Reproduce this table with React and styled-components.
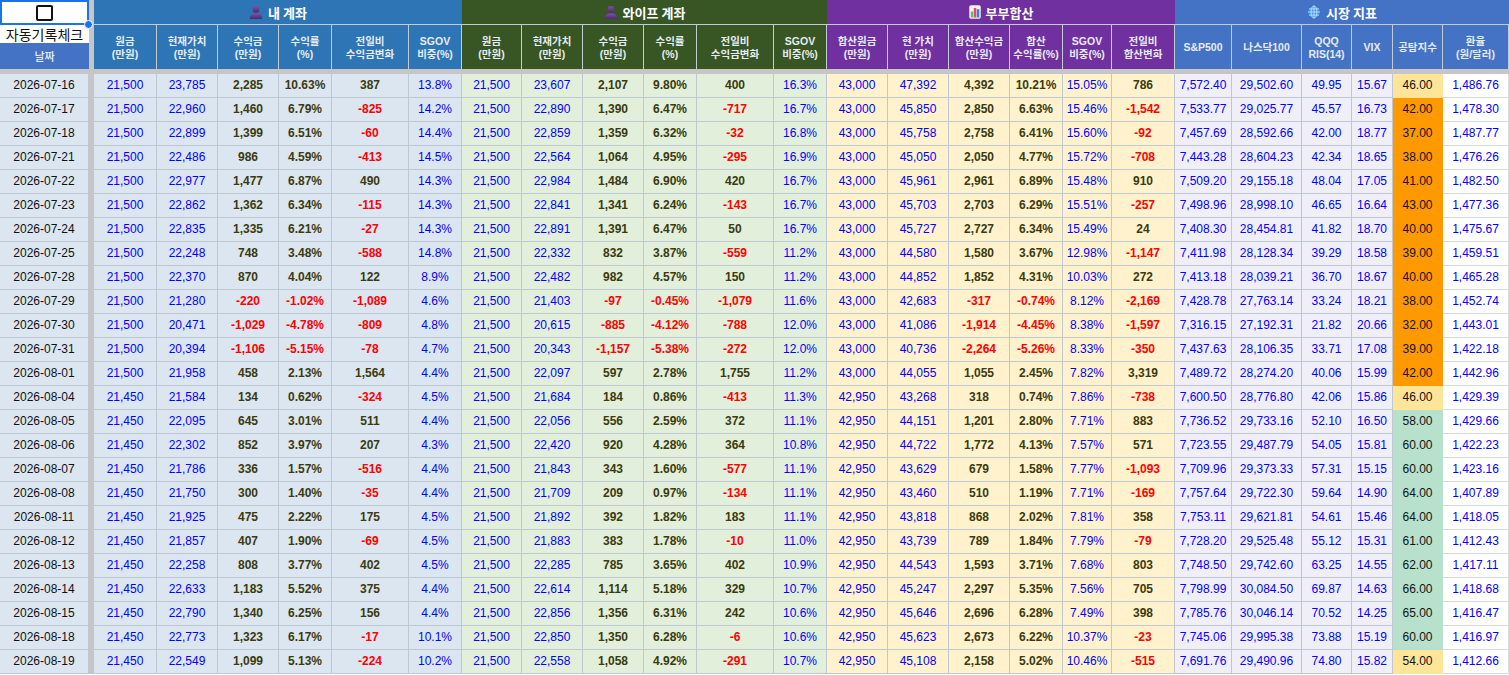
import React from 'react';
import styled, { createGlobalStyle } from 'styled-components';

const GlobalStyle = createGlobalStyle`
  html, body { margin: 0; padding: 0; background: #ffffff; overflow: hidden; }
  body { font-family: "Liberation Sans", Arial, "Noto Sans CJK KR", sans-serif; }
  * { box-sizing: border-box; }
`;

const COLS =
  '89px 5px 63px 61px 61px 53px 77px 53px 60px 61px 61px 53px 77px 53px 61px 61px 61px 53px 49px 63px 57px 70px 50px 41px 50px 66px';

const FREEZE = '#c6c6c6';
const GRID = '#bfc8d1';
const BLUE = '#0000ff';
const OLIVE = '#3a3a0e';
const RED = '#ff0000';

const Sheet = styled.div`
  width: 1509px;
  display: flex;
  flex-direction: column;
`;

const HeaderGrid = styled.div`
  display: grid;
  grid-template-columns: ${COLS};
  grid-template-rows: 25px 44px;
`;

const LeftHead = styled.div`
  grid-row: 1 / span 2;
  grid-column: 1;
  display: flex;
  flex-direction: column;
  position: relative;
  z-index: 2;
`;

const CheckCell = styled.div`
  height: 25px;
  background: #ffffff;
  display: flex;
  align-items: center;
  justify-content: center;
  position: relative;
  box-shadow: inset 0 0 0 2px #1a73e8;
  &::after {
    content: '';
    position: absolute;
    right: -4px;
    bottom: -4px;
    width: 7px;
    height: 7px;
    border-radius: 50%;
    background: #1a73e8;
    border: 1px solid #ffffff;
  }
`;

const CheckBox = styled.div`
  width: 17px;
  height: 16px;
  border: 2px solid #111111;
  border-radius: 2px;
  background: #ffffff;
`;

const AutoLabel = styled.div`
  height: 18px;
  background: #ffffff;
  color: #111111;
  font-family: "Noto Sans CJK KR", sans-serif;
  font-size: 14px;
  line-height: 18px;
  text-align: center;
  white-space: nowrap;
  overflow: hidden;
`;

const DateHead = styled.div`
  height: 26px;
  background: #4472c4;
  color: #e8eef8;
  font-family: "Noto Sans CJK KR", sans-serif;
  font-size: 11px;
  font-weight: 500;
  display: flex;
  align-items: center;
  justify-content: center;
`;

const FreezeCol = styled.div`
  grid-row: ${(p) => p.$rows || 'auto'};
  grid-column: 2;
  background: ${FREEZE};
`;

const GroupTitle = styled.div`
  grid-row: 1;
  grid-column: span 6;
  background: ${(p) => p.$bg};
  border-bottom: 1px solid ${(p) => p.$line};
  color: #ffffff;
  font-family: "Noto Sans CJK KR", sans-serif;
  font-size: 13px;
  font-weight: 700;
  display: flex;
  align-items: center;
  justify-content: center;
  gap: 5px;
`;

const SubHead = styled.div`
  grid-row: 2;
  background: ${(p) => p.$bg};
  border-right: 1px solid ${(p) => p.$line};
  color: #e6ecf3;
  font-family: "Liberation Sans", Arial, "Noto Sans CJK KR", sans-serif;
  font-size: 10.5px;
  font-weight: 700;
  line-height: 13px;
  display: flex;
  flex-direction: column;
  align-items: center;
  justify-content: center;
  text-align: center;
  white-space: nowrap;
  padding-top: 1px;
`;

const FreezeRow = styled.div`
  height: 5px;
  background: ${FREEZE};
`;

const DataRow = styled.div`
  display: grid;
  grid-template-columns: ${COLS};
  height: 24px;
`;

const Cell = styled.div`
  background: ${(p) => p.$bg};
  color: ${(p) => p.$color};
  font-weight: ${(p) => (p.$bold ? 700 : 400)};
  border-right: 1px solid ${(p) => p.$line || GRID};
  border-bottom: 1px solid ${(p) => p.$line || GRID};
  font-size: 12px;
  line-height: 23px;
  text-align: center;
  white-space: nowrap;
  overflow: hidden;
`;

const GapCell = styled.div`
  background: ${FREEZE};
`;

const PersonIcon = ({ id }) => (
  <svg width="14" height="14" viewBox="0 0 14 14">
    <defs>
      <linearGradient id={id} x1="0" y1="0" x2="0" y2="1">
        <stop offset="0" stopColor="#7d52a8" />
        <stop offset="1" stopColor="#4a2a6c" />
      </linearGradient>
    </defs>
    <circle cx="7" cy="4.4" r="3.4" fill={`url(#${id})`} />
    <path d="M0.8 14 C0.8 9.6 3.4 8.2 7 8.2 C10.6 8.2 13.2 9.6 13.2 14 Z" fill={`url(#${id})`} />
  </svg>
);

const ChartIcon = () => (
  <svg width="12" height="14" viewBox="0 0 12 14">
    <rect x="0.5" y="0.5" width="11" height="13" rx="1.5" fill="#f2f2f2" stroke="#cfcfcf" strokeWidth="0.8" />
    <rect x="1.8" y="6.5" width="2.5" height="6" fill="#5fc35a" />
    <rect x="4.8" y="3" width="2.5" height="9.5" fill="#e8467c" />
    <rect x="7.8" y="4.2" width="2.5" height="8.3" fill="#3a7fdc" />
  </svg>
);

const GlobeIcon = () => (
  <svg width="14" height="14" viewBox="0 0 14 14">
    <circle cx="7" cy="7" r="6.3" fill="#3e93e6" stroke="#2868b8" strokeWidth="0.6" />
    <g fill="none" stroke="#cfe7ff" strokeWidth="0.8">
      <ellipse cx="7" cy="7" rx="2.9" ry="6.2" />
      <line x1="7" y1="0.8" x2="7" y2="13.2" />
      <line x1="0.8" y1="7" x2="13.2" y2="7" />
      <path d="M1.9 3.9 H12.1 M1.9 10.1 H12.1" />
    </g>
  </svg>
);

const GROUPS = [
  {
    title: '내 계좌',
    icon: <PersonIcon id="pa" />,
    head: '#2e75b6',
    body: '#dce6f1',
    heads: [['원금', '(만원)'], ['현재가치', '(만원)'], ['수익금', '(만원)'], ['수익률', '(%)'], ['전일비', '수익금변화'], ['SGOV', '비중(%)']],
    kinds: ['b', 'b', 's', 's', 's', 'b'],
  },
  {
    title: '와이프 계좌',
    icon: <PersonIcon id="pb" />,
    head: '#375623',
    body: '#e2efda',
    heads: [['원금', '(만원)'], ['현재가치', '(만원)'], ['수익금', '(만원)'], ['수익률', '(%)'], ['전일비', '수익금변화'], ['SGOV', '비중(%)']],
    kinds: ['b', 'b', 's', 's', 's', 'b'],
  },
  {
    title: '부부합산',
    icon: <ChartIcon />,
    head: '#7030a0',
    body: '#fff2cc',
    heads: [['합산원금', '(만원)'], ['현 가치', '(만원)'], ['합산수익금', '(만원)'], ['합산', '수익률(%)'], ['SGOV', '비중(%)'], ['전일비', '합산변화']],
    kinds: ['b', 'b', 's', 's', 'b', 's'],
  },
  {
    title: '시장 지표',
    icon: <GlobeIcon />,
    head: '#4472c4',
    body: '#f0eff7',
    heads: [['S&P500'], ['나스닥100'], ['QQQ', 'RIS(14)'], ['VIX'], ['공탐지수'], ['환율', '(원/달러)']],
    kinds: ['b', 'b', 'b', 'b', 'f', 'w'],
  },
];

const RAW = `2026-07-16|21,500 23,785 2,285 10.63% 387 13.8%|21,500 23,607 2,107 9.80% 400 16.3%|43,000 47,392 4,392 10.21% 15.05% 786|7,572.40 29,502.60 49.95 15.67 46.00 1,486.76
2026-07-17|21,500 22,960 1,460 6.79% -825 14.2%|21,500 22,890 1,390 6.47% -717 16.7%|43,000 45,850 2,850 6.63% 15.46% -1,542|7,533.77 29,025.77 45.57 16.73 42.00 1,478.30
2026-07-18|21,500 22,899 1,399 6.51% -60 14.4%|21,500 22,859 1,359 6.32% -32 16.8%|43,000 45,758 2,758 6.41% 15.60% -92|7,457.69 28,592.66 42.00 18.77 37.00 1,487.77
2026-07-21|21,500 22,486 986 4.59% -413 14.5%|21,500 22,564 1,064 4.95% -295 16.9%|43,000 45,050 2,050 4.77% 15.72% -708|7,443.28 28,604.23 42.34 18.65 38.00 1,476.26
2026-07-22|21,500 22,977 1,477 6.87% 490 14.3%|21,500 22,984 1,484 6.90% 420 16.7%|43,000 45,961 2,961 6.89% 15.48% 910|7,509.20 29,155.18 48.04 17.05 41.00 1,482.50
2026-07-23|21,500 22,862 1,362 6.34% -115 14.3%|21,500 22,841 1,341 6.24% -143 16.7%|43,000 45,703 2,703 6.29% 15.51% -257|7,498.96 28,998.10 46.65 16.64 43.00 1,477.36
2026-07-24|21,500 22,835 1,335 6.21% -27 14.3%|21,500 22,891 1,391 6.47% 50 16.7%|43,000 45,727 2,727 6.34% 15.49% 24|7,408.30 28,454.81 41.82 18.70 40.00 1,475.67
2026-07-25|21,500 22,248 748 3.48% -588 14.8%|21,500 22,332 832 3.87% -559 11.2%|43,000 44,580 1,580 3.67% 12.98% -1,147|7,411.98 28,128.34 39.29 18.58 39.00 1,459.51
2026-07-28|21,500 22,370 870 4.04% 122 8.9%|21,500 22,482 982 4.57% 150 11.2%|43,000 44,852 1,852 4.31% 10.03% 272|7,413.18 28,039.21 36.70 18.67 40.00 1,465.28
2026-07-29|21,500 21,280 -220 -1.02% -1,089 4.6%|21,500 21,403 -97 -0.45% -1,079 11.6%|43,000 42,683 -317 -0.74% 8.12% -2,169|7,428.78 27,763.14 33.24 18.21 38.00 1,452.74
2026-07-30|21,500 20,471 -1,029 -4.78% -809 4.8%|21,500 20,615 -885 -4.12% -788 12.0%|43,000 41,086 -1,914 -4.45% 8.38% -1,597|7,316.15 27,192.31 21.82 20.66 32.00 1,443.01
2026-07-31|21,500 20,394 -1,106 -5.15% -78 4.7%|21,500 20,343 -1,157 -5.38% -272 12.0%|43,000 40,736 -2,264 -5.26% 8.33% -350|7,437.63 28,106.35 33.71 17.08 39.00 1,422.18
2026-08-01|21,500 21,958 458 2.13% 1,564 4.4%|21,500 22,097 597 2.78% 1,755 11.2%|43,000 44,055 1,055 2.45% 7.82% 3,319|7,489.72 28,274.20 40.06 15.99 42.00 1,442.96
2026-08-04|21,450 21,584 134 0.62% -324 4.5%|21,500 21,684 184 0.86% -413 11.3%|42,950 43,268 318 0.74% 7.86% -738|7,600.50 28,776.80 42.06 15.86 46.00 1,429.39
2026-08-05|21,450 22,095 645 3.01% 511 4.4%|21,500 22,056 556 2.59% 372 11.1%|42,950 44,151 1,201 2.80% 7.71% 883|7,736.52 29,733.16 52.10 16.50 58.00 1,429.66
2026-08-06|21,450 22,302 852 3.97% 207 4.3%|21,500 22,420 920 4.28% 364 10.8%|42,950 44,722 1,772 4.13% 7.57% 571|7,723.55 29,487.79 54.05 15.81 60.00 1,422.23
2026-08-07|21,450 21,786 336 1.57% -516 4.4%|21,500 21,843 343 1.60% -577 11.1%|42,950 43,629 679 1.58% 7.77% -1,093|7,709.96 29,373.33 57.31 15.15 60.00 1,423.16
2026-08-08|21,450 21,750 300 1.40% -35 4.4%|21,500 21,709 209 0.97% -134 11.1%|42,950 43,460 510 1.19% 7.71% -169|7,757.64 29,722.30 59.64 14.90 64.00 1,407.89
2026-08-11|21,450 21,925 475 2.22% 175 4.5%|21,500 21,892 392 1.82% 183 11.1%|42,950 43,818 868 2.02% 7.81% 358|7,753.11 29,621.81 54.61 15.46 64.00 1,418.05
2026-08-12|21,450 21,857 407 1.90% -69 4.5%|21,500 21,883 383 1.78% -10 11.0%|42,950 43,739 789 1.84% 7.79% -79|7,728.20 29,525.48 55.12 15.31 61.00 1,412.43
2026-08-13|21,450 22,258 808 3.77% 402 4.5%|21,500 22,285 785 3.65% 402 10.9%|42,950 44,543 1,593 3.71% 7.68% 803|7,748.50 29,742.60 63.25 14.55 62.00 1,417.11
2026-08-14|21,450 22,633 1,183 5.52% 375 4.4%|21,500 22,614 1,114 5.18% 329 10.7%|42,950 45,247 2,297 5.35% 7.56% 705|7,798.99 30,084.50 69.87 14.63 66.00 1,418.68
2026-08-15|21,450 22,790 1,340 6.25% 156 4.4%|21,500 22,856 1,356 6.31% 242 10.6%|42,950 45,646 2,696 6.28% 7.49% 398|7,785.76 30,046.14 70.52 14.25 65.00 1,416.47
2026-08-18|21,450 22,773 1,323 6.17% -17 10.1%|21,500 22,850 1,350 6.28% -6 10.6%|42,950 45,623 2,673 6.22% 10.37% -23|7,745.06 29,995.38 73.88 15.19 60.00 1,416.97
2026-08-19|21,450 22,549 1,099 5.13% -224 10.2%|21,500 22,558 1,058 4.92% -291 10.7%|42,950 45,108 2,158 5.02% 10.46% -515|7,691.76 29,490.96 74.80 15.82 54.00 1,412.66`;

const ROWS = RAW.split('\n').map((line) => {
  const [date, ...groups] = line.split('|');
  return { date, groups: groups.map((g) => g.trim().split(' ')) };
});

const fearColor = (v) => {
  const n = parseFloat(v);
  if (n < 45) return '#ff9900';
  if (n < 55) return '#ffe599';
  return '#b7e1cd';
};

const cellProps = (kind, value, bg) => {
  switch (kind) {
    case 's':
      return { $bg: bg, $color: value.startsWith('-') ? RED : OLIVE, $bold: true };
    case 'f': {
      const c = fearColor(value);
      return { $bg: c, $color: '#111111', $line: c };
    }
    case 'w':
      return { $bg: '#ffffff', $color: BLUE, $line: '#d6dbe0' };
    default:
      return { $bg: bg, $color: BLUE };
  }
};

export default function App() {
  return (
    <>
      <GlobalStyle />
      <Sheet>
        <HeaderGrid>
          <LeftHead>
            <CheckCell>
              <CheckBox />
            </CheckCell>
            <AutoLabel>자동기록체크</AutoLabel>
            <DateHead>날짜</DateHead>
          </LeftHead>
          <FreezeCol $rows="1 / span 2" />
          {GROUPS.map((g) => (
            <GroupTitle key={g.title} $bg={g.head} $line="#c3cbd3">
              {g.icon}
              <span>{g.title}</span>
            </GroupTitle>
          ))}
          {GROUPS.map((g) =>
            g.heads.map((h, i) => (
              <SubHead key={g.title + i} $bg={g.head} $line="#c3cbd3">
                {h.map((t) => (
                  <span key={t}>{t}</span>
                ))}
              </SubHead>
            ))
          )}
        </HeaderGrid>
        <FreezeRow />
        {ROWS.map((r) => (
          <DataRow key={r.date}>
            <Cell $bg="#dce6f1" $color="#111111">
              {r.date}
            </Cell>
            <GapCell />
            {r.groups.map((vals, gi) =>
              vals.map((v, ci) => (
                <Cell key={gi + '-' + ci} {...cellProps(GROUPS[gi].kinds[ci], v, GROUPS[gi].body)}>
                  {v}
                </Cell>
              ))
            )}
          </DataRow>
        ))}
      </Sheet>
    </>
  );
}
